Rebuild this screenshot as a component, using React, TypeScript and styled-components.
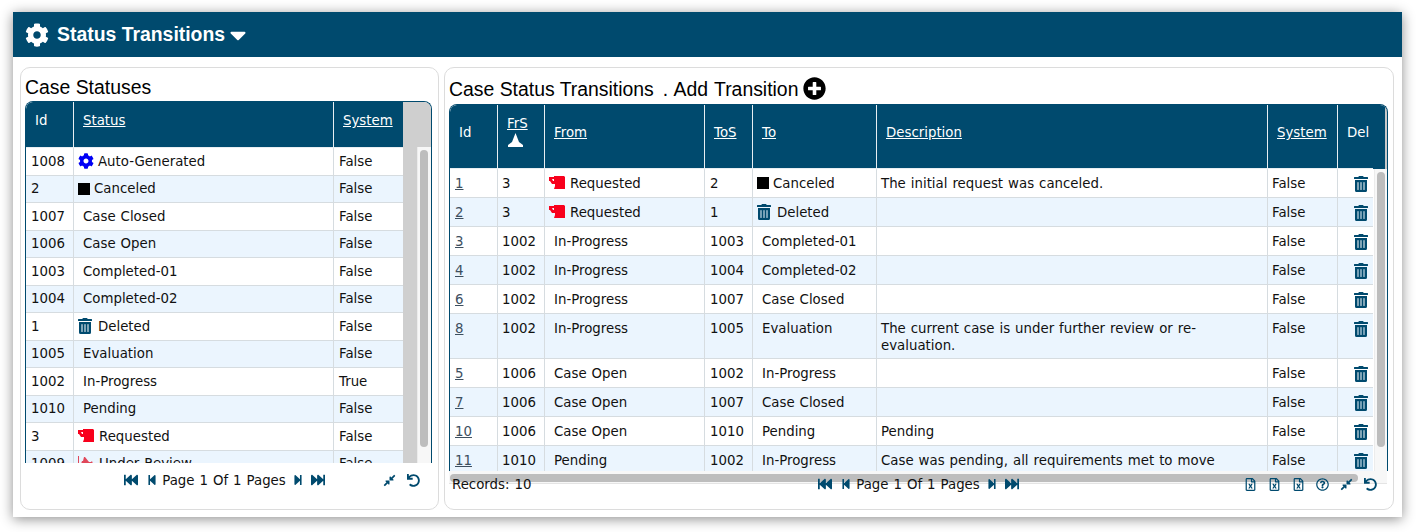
import React from 'react'
import styled, { createGlobalStyle } from 'styled-components'
import {
  FaCaretDown,
  FaCog,
  FaCompressAlt,
  FaFastBackward,
  FaFastForward,
  FaPlusCircle,
  FaRegFileExcel,
  FaRegQuestionCircle,
  FaStepBackward,
  FaStepForward,
  FaTrashAlt,
  FaUndo
} from 'react-icons/fa'

const navy = '#004a6e'
const grid = '#d6dce0'

const GlobalStyle = createGlobalStyle`
  html, body {
    margin: 0;
    background: #fff;
  }
  body {
    font-family: "DejaVu Sans", Verdana, sans-serif;
    font-size: 13.33px;
    word-spacing: 0.75px;
    color: #111;
  }
`

const Page = styled.div`
  padding: 12px 14px 15px 13px;
`

const Window = styled.div`
  height: 505px;
  display: flex;
  flex-direction: column;
  background: #fff;
  box-shadow: 0 2px 12px rgba(0, 0, 0, 0.45);
`

const TopBar = styled.header`
  height: 45px;
  flex: none;
  display: flex;
  align-items: center;
  padding-left: 12px;
  gap: 8px;
  background: ${navy};
  color: #fff;
  font: bold 19.4px "Liberation Sans", Arial, sans-serif;
  word-spacing: 0;
`

const Caret = styled(FaCaretDown)`
  font-size: 26px;
  margin-left: -8px;
`

const Body = styled.main`
  flex: 1;
  display: flex;
  gap: 5px;
  padding: 10px 8px 7px 7px;
`

const Panel = styled.section<{ $width: number; $pad: number }>`
  width: ${({ $width }) => $width}px;
  height: 443px;
  box-sizing: border-box;
  border: 1px solid #dcdcdc;
  border-radius: 10px;
  padding: 0 ${({ $pad }) => $pad}px 0 4px;
  display: flex;
  flex-direction: column;
`

const Title = styled.h2<{ $height: number; $lift: number }>`
  margin: 0;
  height: ${({ $height }) => $height}px;
  box-sizing: border-box;
  padding-bottom: ${({ $lift }) => $lift}px;
  display: flex;
  align-items: flex-end;
  flex: none;
  font: normal 19.4px/24px "Liberation Sans", Arial, sans-serif;
  word-spacing: 0;
  color: #000;
  white-space: pre;
`

const AddLabel = styled.span`
  margin-left: 9px;
  word-spacing: 1px;
`

const AddIcon = styled(FaPlusCircle)`
  font-size: 23px;
  margin-left: 5px;
  color: #000;
  position: relative;
  top: -1px;
`

const Frame = styled.div<{ $height: number }>`
  height: ${({ $height }) => $height}px;
  flex: none;
  display: flex;
  border-left: 1px solid ${navy};
  border-right: 1px solid ${navy};
  border-top: 1px solid ${navy};
  border-radius: 8px 8px 0 0;
  overflow: hidden;
  box-sizing: border-box;
`

const Viewport = styled.div<{ $width: number }>`
  width: ${({ $width }) => $width}px;
  flex: none;
  overflow: hidden;
  background: #fff;
`

const Table = styled.table<{ $width: number }>`
  width: ${({ $width }) => $width}px;
  table-layout: fixed;
  border-collapse: separate;
  border-spacing: 0;
`

const HeadRow = styled.tr<{ $height: number }>`
  height: ${({ $height }) => $height}px;
  background: ${navy};
  color: #fff;
`

const Th = styled.th`
  padding: 0 0 8px 9px;
  font-weight: normal;
  text-align: left;
  border-right: 1px solid #e8eef2;
  border-bottom: 1px solid #e8eef2;
  &:last-child {
    border-right: none;
  }
`

const SortLink = styled.a`
  color: #fff;
  text-decoration: underline;
`

const SortMark = styled.svg`
  display: block;
  width: 15px;
  height: 14px;
  margin: 2px 0 3px 1px;
`

const Row = styled.tr<{ $alt: boolean }>`
  background: ${({ $alt }) => ($alt ? '#ebf5fe' : '#fff')};
`

const Td = styled.td<{ $pad: number }>`
  padding: ${({ $pad }) => $pad}px 5px;
  line-height: 17px;
  vertical-align: top;
  border-right: 1px solid ${grid};
  border-bottom: 1px solid ${grid};
  &:last-child {
    border-right: none;
  }
`

const TightTd = styled(Td)`
  padding-left: 4px;
`

const DescTd = styled(TightTd)`
  padding-bottom: 4.5px;
`

const IdLink = styled.a`
  color: #3d4f5f;
  text-decoration: underline;
`

const StatusLabel = styled.span<{ $plain: boolean }>`
  display: flex;
  align-items: center;
  gap: 4px;
  white-space: nowrap;
  margin-left: -1px;
  padding-left: ${({ $plain }) => ($plain ? '5px' : '0')};
`

const TrashIcon = styled(FaTrashAlt)`
  display: block;
  width: 14px;
  height: 16px;
  color: ${navy};
  flex: none;
`

const StatusTrash = styled(TrashIcon)`
  margin-right: 2px;
`

const DelTrash = styled(TrashIcon)`
  margin: 0 0 0 auto;
  position: relative;
  top: 1px;
`

const GearIcon = styled(FaCog)`
  width: 16px;
  height: 16px;
  color: #0000f5;
  flex: none;
`

const SquareIcon = styled.i`
  width: 12px;
  height: 12px;
  background: #000;
  flex: none;
`

const RedIcon = styled.svg`
  width: 16px;
  height: 13px;
  flex: none;
  margin: -2px 1px 0 0;
`

const Rail = styled.div`
  flex: 1;
  display: flex;
  flex-direction: column;
  min-width: 0;
`

const RailHead = styled.div<{ $height: number; $color: string; $edge?: boolean }>`
  height: ${({ $height }) => $height}px;
  flex: none;
  background: ${({ $color }) => $color};
  border-right: ${({ $edge }) => ($edge ? '2px solid #c8c8c8' : 'none')};
`

const RailBody = styled.div`
  flex: 1;
  display: flex;
  min-height: 0;
`

const Gutter = styled.div<{ $width: number; $color: string }>`
  width: ${({ $width }) => $width}px;
  flex: none;
  background: ${({ $color }) => $color};
`

const Track = styled.div<{ $pad: number }>`
  flex: 1;
  padding: 3px ${({ $pad }) => $pad}px 0 2px;
  background: #f7f7f7;
  border-left: 1px solid #ececec;
`

const Thumb = styled.div<{ $height: number }>`
  height: ${({ $height }) => $height}px;
  border-radius: 4px;
  background: #bdbdbd;
`

const HTrack = styled.div<{ $right: number }>`
  height: 13px;
  flex: none;
  box-sizing: border-box;
  margin-right: 1px;
  padding: 3px ${({ $right }) => $right}px 0 1px;
  background: #f7f7f7;
  border-bottom: 1px solid #e4e4e4;
`

const HThumb = styled.div`
  height: 8px;
  border-radius: 4px;
  background: #bdbdbd;
`

const Footer = styled.footer<{ $top: number; $shift?: number }>`
  display: grid;
  grid-template-columns: 1fr auto 1fr;
  align-items: center;
  height: 20px;
  margin-top: ${({ $top }) => $top}px;
  padding-right: ${({ $shift }) => $shift ?? 0}px;
  position: relative;
`

const Records = styled.span`
  padding-left: 3px;
`

const Pager = styled.div`
  display: flex;
  align-items: center;
  color: ${navy};
`

const PageText = styled.span`
  color: #111;
  margin: 0 7px 0 5px;
`

const FastIcon = styled.span<{ $gap?: number }>`
  display: inline-flex;
  font-size: 14px;
  margin-right: ${({ $gap }) => $gap ?? 0}px;
`

const StepIcon = styled.span<{ $gap?: number }>`
  display: inline-flex;
  margin-right: ${({ $gap }) => $gap ?? 0}px;
  svg {
    width: 10px;
    height: 12px;
  }
`

const Tools = styled.div<{ $right: number }>`
  display: flex;
  justify-content: flex-end;
  align-items: center;
  gap: 11px;
  padding-right: ${({ $right }) => $right}px;
  color: ${navy};
  font-size: 13px;
`

type Status = 'gear' | 'square' | 'trash' | 'red' | 'review' | undefined

const StatusIcon = ({ kind }: { kind: Status }) => {
  if (kind === 'gear') return <GearIcon />
  if (kind === 'square') return <SquareIcon />
  if (kind === 'trash') return <StatusTrash />
  if (kind === 'red')
    return (
      <RedIcon viewBox="0 0 16 13">
        <path
          fill="#f8001c"
          fillRule="evenodd"
          d="M0 1h5V0h10l1 1v12H5l1-3V8H3L1 5H0zM3 3l1 2h1V3z"
        />
      </RedIcon>
    )
  if (kind === 'review')
    return (
      <RedIcon viewBox="0 0 16 13">
        <path fill="#e0475a" d="M0 0h1v13H0zM6 1h1l4 5h2l1-1 1 3H3l1-3h1z" />
      </RedIcon>
    )
  return null
}

const StatusName = ({ name, kind }: { name: string; kind?: Status }) => (
  <StatusLabel $plain={!kind}>
    <StatusIcon kind={kind} />
    {name}
  </StatusLabel>
)

const leftRows: [string, string, Status, string][] = [
  ['1008', 'Auto-Generated', 'gear', 'False'],
  ['2', 'Canceled', 'square', 'False'],
  ['1007', 'Case Closed', undefined, 'False'],
  ['1006', 'Case Open', undefined, 'False'],
  ['1003', 'Completed-01', undefined, 'False'],
  ['1004', 'Completed-02', undefined, 'False'],
  ['1', 'Deleted', 'trash', 'False'],
  ['1005', 'Evaluation', undefined, 'False'],
  ['1002', 'In-Progress', undefined, 'True'],
  ['1010', 'Pending', undefined, 'False'],
  ['3', 'Requested', 'red', 'False'],
  ['1009', 'Under Review', 'review', 'False']
]

type Transition = {
  id: string
  frs: string
  from: string
  fromKind?: Status
  tos: string
  to: string
  toKind?: Status
  desc: string
}

const rightRows: Transition[] = [
  { id: '1', frs: '3', from: 'Requested', fromKind: 'red', tos: '2', to: 'Canceled', toKind: 'square', desc: 'The initial request was canceled.' },
  { id: '2', frs: '3', from: 'Requested', fromKind: 'red', tos: '1', to: 'Deleted', toKind: 'trash', desc: '' },
  { id: '3', frs: '1002', from: 'In-Progress', tos: '1003', to: 'Completed-01', desc: '' },
  { id: '4', frs: '1002', from: 'In-Progress', tos: '1004', to: 'Completed-02', desc: '' },
  { id: '6', frs: '1002', from: 'In-Progress', tos: '1007', to: 'Case Closed', desc: '' },
  { id: '8', frs: '1002', from: 'In-Progress', tos: '1005', to: 'Evaluation', desc: 'The current case is under further review or re-evaluation.' },
  { id: '5', frs: '1006', from: 'Case Open', tos: '1002', to: 'In-Progress', desc: '' },
  { id: '7', frs: '1006', from: 'Case Open', tos: '1007', to: 'Case Closed', desc: '' },
  { id: '10', frs: '1006', from: 'Case Open', tos: '1010', to: 'Pending', desc: 'Pending' },
  { id: '11', frs: '1010', from: 'Pending', tos: '1002', to: 'In-Progress', desc: 'Case was pending, all requirements met to move' }
]

const PagerBar = () => (
  <Pager>
    <FastIcon $gap={9}><FaFastBackward /></FastIcon>
    <StepIcon><FaStepBackward /></StepIcon>
    <PageText>Page 1 Of 1 Pages</PageText>
    <StepIcon $gap={8}><FaStepForward /></StepIcon>
    <FastIcon><FaFastForward /></FastIcon>
  </Pager>
)

export default function App() {
  return (
    <Page>
      <GlobalStyle />
      <Window>
        <TopBar>
          <FaCog size={24} />
          <span>Status Transitions</span>
          <Caret />
        </TopBar>
        <Body>
          <Panel $width={419} $pad={6}>
            <Title $height={33} $lift={2}>Case Statuses</Title>
            <Frame $height={362}>
              <Viewport $width={377}>
                <Table $width={377}>
                  <colgroup>
                    <col width={48} />
                    <col width={260} />
                    <col width={69} />
                  </colgroup>
                  <thead>
                    <HeadRow $height={46}>
                      <Th>Id</Th>
                      <Th><SortLink>Status</SortLink></Th>
                      <Th><SortLink>System</SortLink></Th>
                    </HeadRow>
                  </thead>
                  <tbody>
                    {leftRows.map(([id, name, kind, sys], i) => (
                      <Row key={id} $alt={i % 2 === 1}>
                        <Td $pad={4.75}>{id}</Td>
                        <Td $pad={4.75}><StatusName name={name} kind={kind} /></Td>
                        <Td $pad={4.75}>{sys}</Td>
                      </Row>
                    ))}
                  </tbody>
                </Table>
              </Viewport>
              <Rail>
                <RailHead $height={45} $color="#cfcfcf" />
                <RailBody>
                  <Gutter $width={14} $color="#cfcfcf" />
                  <Track $pad={3}><Thumb $height={297} /></Track>
                </RailBody>
              </Rail>
            </Frame>
            <Footer $top={7} $shift={8}>
              <span />
              <PagerBar />
              <Tools $right={4}>
                <FaCompressAlt />
                <FaUndo />
              </Tools>
            </Footer>
          </Panel>
          <Panel $width={950} $pad={5}>
            <Title $height={36} $lift={3}>
              Case Status Transitions<AddLabel>. Add Transition</AddLabel><AddIcon />
            </Title>
            <Frame $height={367}>
              <Viewport $width={923}>
                <Table $width={923}>
                  <colgroup>
                    <col width={48} />
                    <col width={47} />
                    <col width={160} />
                    <col width={48} />
                    <col width={124} />
                    <col width={391} />
                    <col width={70} />
                    <col width={35} />
                  </colgroup>
                  <thead>
                    <HeadRow $height={64}>
                      <Th>Id</Th>
                      <Th>
                        <SortLink>FrS</SortLink>
                        <SortMark viewBox="0 0 15 14">
                          <path fill="#fff" d="M7.5 0l3.5 9 4 3v2H0v-2l4-3z" />
                        </SortMark>
                      </Th>
                      <Th><SortLink>From</SortLink></Th>
                      <Th><SortLink>ToS</SortLink></Th>
                      <Th><SortLink>To</SortLink></Th>
                      <Th><SortLink>Description</SortLink></Th>
                      <Th><SortLink>System</SortLink></Th>
                      <Th>Del</Th>
                    </HeadRow>
                  </thead>
                  <tbody>
                    {rightRows.map((r, i) => (
                      <Row key={r.id} $alt={i % 2 === 1}>
                        <Td $pad={5.5}><IdLink>{r.id}</IdLink></Td>
                        <TightTd $pad={5.5}>{r.frs}</TightTd>
                        <Td $pad={5.5}><StatusName name={r.from} kind={r.fromKind} /></Td>
                        <Td $pad={5.5}>{r.tos}</Td>
                        <Td $pad={5.5}><StatusName name={r.to} kind={r.toKind} /></Td>
                        <DescTd $pad={5.5}>{r.desc}</DescTd>
                        <TightTd $pad={5.5}>False</TightTd>
                        <Td $pad={5.5}><DelTrash /></Td>
                      </Row>
                    ))}
                  </tbody>
                </Table>
              </Viewport>
              <Rail>
                <RailHead $height={64} $color={navy} $edge />
                <RailBody>
                  <Gutter $width={1} $color="#fff" />
                  <Track $pad={2}><Thumb $height={275} /></Track>
                </RailBody>
              </Rail>
            </Frame>
            <HTrack $right={29}><HThumb /></HTrack>
            <Footer $top={-10}>
              <Records>Records: 10</Records>
              <PagerBar />
              <Tools $right={11}>
                <FaRegFileExcel />
                <FaRegFileExcel />
                <FaRegFileExcel />
                <FaRegQuestionCircle />
                <FaCompressAlt />
                <FaUndo />
              </Tools>
            </Footer>
          </Panel>
        </Body>
      </Window>
    </Page>
  )
}
